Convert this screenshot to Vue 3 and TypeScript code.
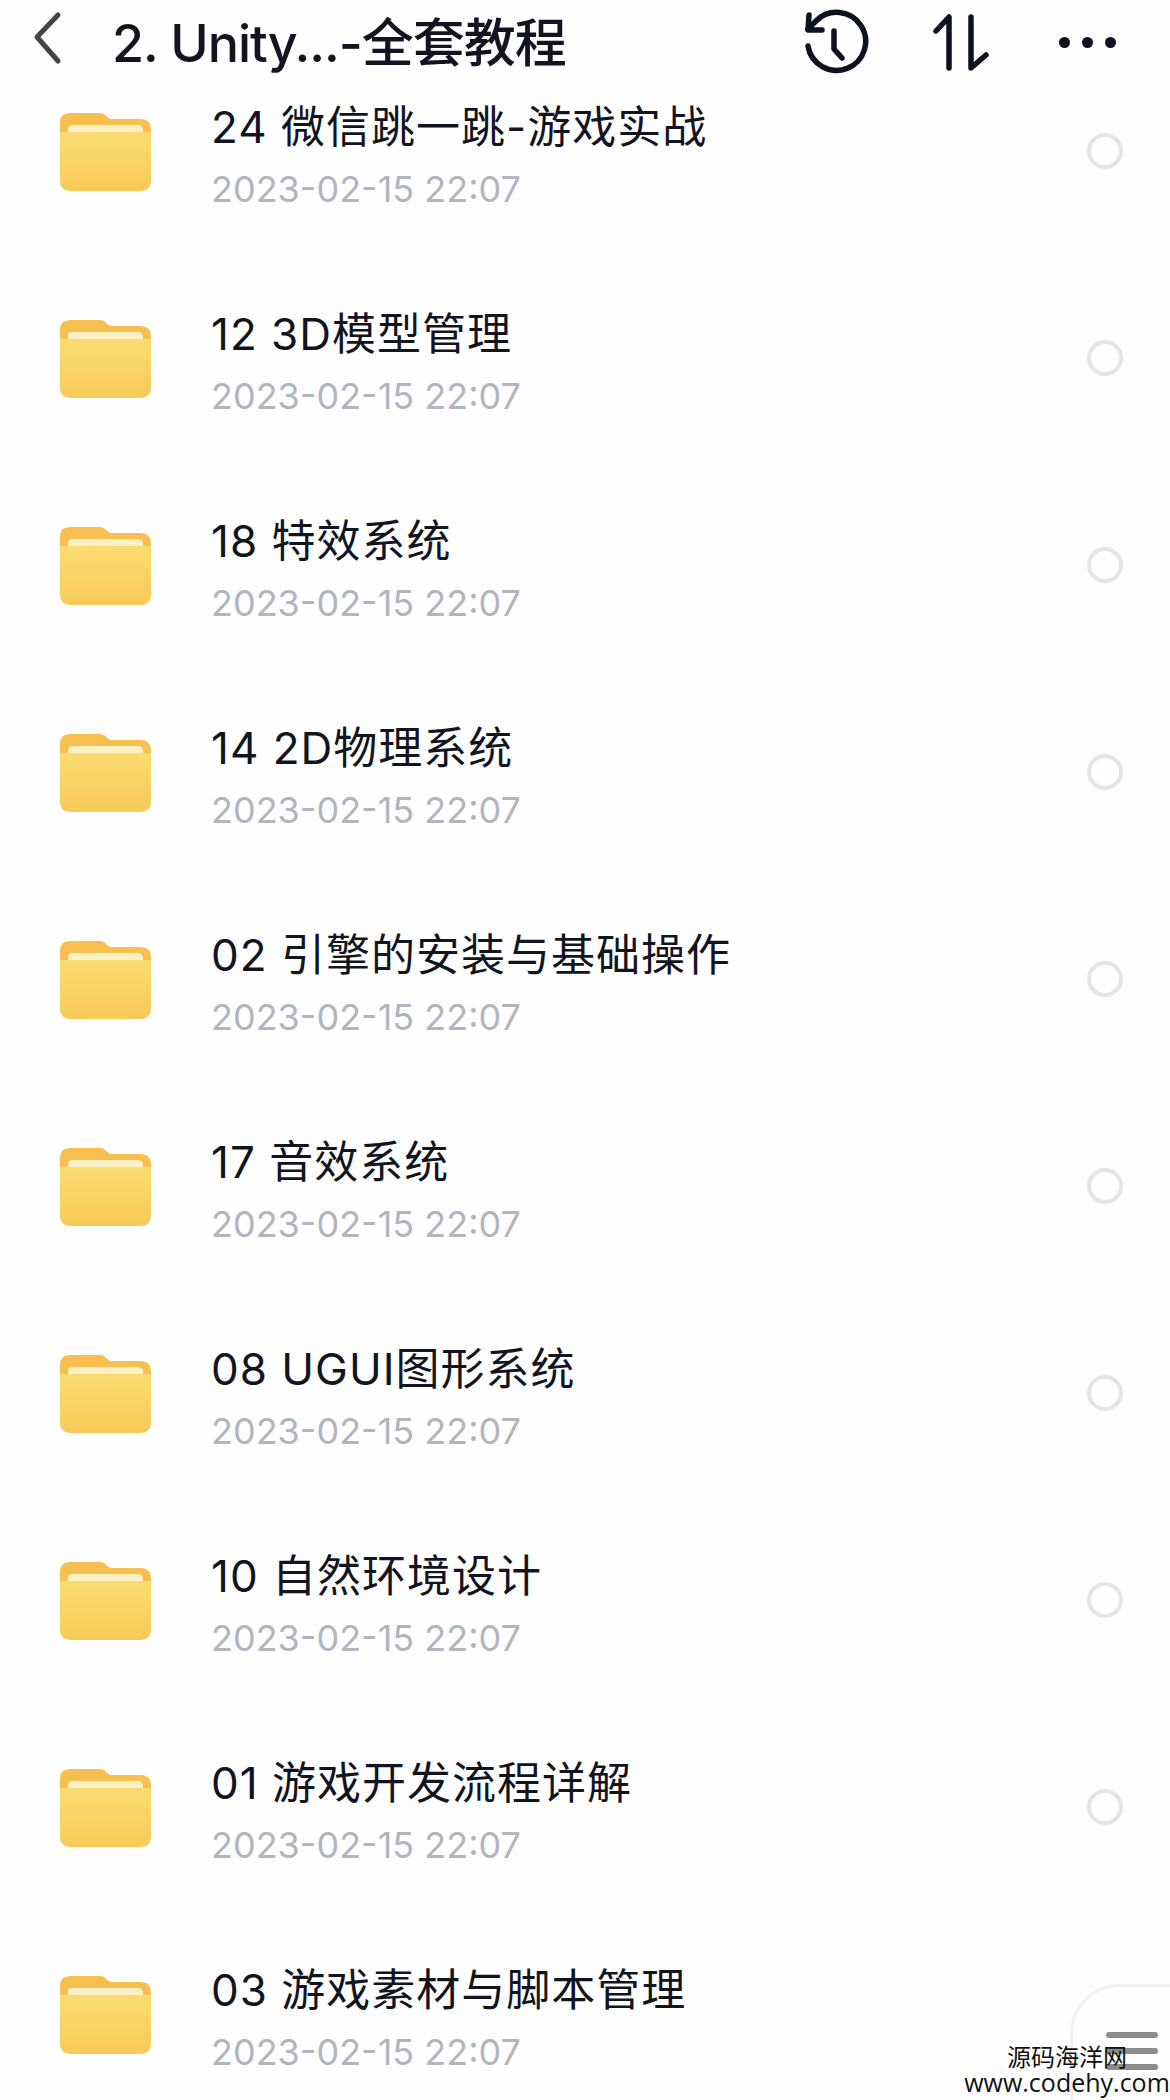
<script setup lang="ts">
interface Folder {
  name: string;
  time: string;
}

const folders: Folder[] = [
  { name: "24 微信跳一跳-游戏实战", time: "2023-02-15 22:07" },
  { name: "12 3D模型管理", time: "2023-02-15 22:07" },
  { name: "18 特效系统", time: "2023-02-15 22:07" },
  { name: "14 2D物理系统", time: "2023-02-15 22:07" },
  { name: "02 引擎的安装与基础操作", time: "2023-02-15 22:07" },
  { name: "17 音效系统", time: "2023-02-15 22:07" },
  { name: "08 UGUI图形系统", time: "2023-02-15 22:07" },
  { name: "10 自然环境设计", time: "2023-02-15 22:07" },
  { name: "01 游戏开发流程详解", time: "2023-02-15 22:07" },
  { name: "03 游戏素材与脚本管理", time: "2023-02-15 22:07" },
];
</script>

<template>
  <main class="page">
    <header class="topbar">
      <svg class="back" viewBox="0 0 30 54" width="30" height="54" aria-hidden="true">
        <path d="M25 4 L4 26 L25 50" />
      </svg>
      <h1 class="title">2. Unity...-全套教程</h1>
      <div class="actions">
        <svg class="icon" viewBox="0 0 72 72" width="72" height="72" aria-hidden="true">
          <path d="M9 40 A 29 29 0 1 0 17 15 L 9 23" />
          <path d="M10 9 L 9 24 L 23 24" />
          <path d="M35 25 L 35 43 L 43 52" />
        </svg>
        <svg class="icon" viewBox="0 0 72 72" width="72" height="72" aria-hidden="true">
          <path d="M15 25 L 28 11 L 28 62" />
          <path d="M50 11 L 50 62 L 65 49" />
        </svg>
        <div class="dots">
          <span></span>
          <span></span>
          <span></span>
        </div>
      </div>
    </header>

    <ul class="list">
      <li v-for="item in folders" :key="item.name" class="row">
        <svg class="folder" viewBox="0 0 91 79" width="91" height="79" aria-hidden="true">
          <defs>
            <linearGradient id="front" x1="0" y1="0" x2="0" y2="1">
              <stop offset="0" stop-color="#fadc72" />
              <stop offset="1" stop-color="#f7ca58" />
            </linearGradient>
          </defs>
          <path d="M0 10 Q0 0 10 0 L40 0 Q44 0 46 3 L50 6 L80 6 Q91 6 91 17 L91 30 L0 30 Z" fill="#f6bf4f" />
          <path d="M8 16 Q8 12 12 12 L78 12 Q82 12 83 16 L83 22 L8 22 Z" fill="#fdf0c2" />
          <path d="M0 19 L91 19 L91 67 Q91 78 80 78 L11 78 Q0 78 0 67 Z" fill="url(#front)" />
        </svg>
        <div class="info">
          <p class="name">{{ item.name }}</p>
          <p class="time">{{ item.time }}</p>
        </div>
        <span class="radio"></span>
      </li>
    </ul>

    <div class="fab">
      <span></span>
      <span></span>
      <span></span>
    </div>
    <div class="mark">
      <span class="mark-cn">源码海洋网</span>
      <span class="mark-en">www.codehy.com</span>
    </div>
  </main>
</template>

<style scoped>
.page {
  position: relative;
  width: 1170px;
  height: 2100px;
  overflow: hidden;
  background: #fefefe;
  color: #12151f;
  font-family: Inter, "Noto Sans CJK SC", sans-serif;
}

.topbar {
  display: flex;
  align-items: center;
  height: 84px;
  padding-left: 33px;
}

.back {
  flex: none;
  margin-top: -8px;
}

.back path {
  fill: none;
  stroke: #444;
  stroke-width: 5;
  stroke-linecap: round;
  stroke-linejoin: round;
}

.title {
  margin: -5px 0 0 49px;
  font-size: 52px;
  font-weight: 500;
  letter-spacing: -1px;
  white-space: nowrap;
}

.actions {
  display: flex;
  align-items: center;
  margin-left: auto;
  padding-right: 54px;
}

.icon {
  flex: none;
}

.icon path {
  fill: none;
  stroke: #0d1220;
  stroke-width: 5.5;
  stroke-linecap: round;
  stroke-linejoin: round;
}

.icon + .icon {
  margin-left: 50px;
}

.dots {
  display: flex;
  gap: 12px;
  margin-left: 66px;
}

.dots span {
  width: 11px;
  height: 11px;
  background: #0d1220;
  border-radius: 50%;
}

.list {
  margin: 0;
  padding: 0;
  list-style: none;
}

.row {
  display: flex;
  align-items: flex-start;
  height: 207px;
  padding: 29px 47px 0 60px;
  box-sizing: border-box;
}

.folder {
  flex: none;
}

.info {
  margin-left: 60px;
  margin-top: -13px;
}

.name {
  margin: 0;
  font-size: 44px;
  line-height: 54px;
  letter-spacing: 1px;
  white-space: nowrap;
}

.time {
  margin: 13px 0 0;
  font-size: 36px;
  line-height: 44px;
  color: #b1b5be;
  white-space: nowrap;
}

.radio {
  flex: none;
  width: 36px;
  height: 36px;
  margin: 20px 0 0 auto;
  border: 4px solid #e3e5e8;
  border-radius: 50%;
  box-sizing: border-box;
}

.fab {
  position: absolute;
  top: 1984px;
  left: 1070px;
  width: 160px;
  height: 160px;
  padding: 45px 0 0 33px;
  box-sizing: border-box;
  border: 3px solid #f1f1f2;
  border-radius: 50px;
  background: #fefefe;
}

.fab span {
  display: block;
  width: 52px;
  height: 6px;
  margin-bottom: 10px;
  background: #8c8c8c;
  border-radius: 3px;
}

.mark {
  position: absolute;
  top: 2046px;
  left: 965px;
  display: flex;
  flex-direction: column;
  align-items: center;
  width: 204px;
  color: #111;
}

.mark-cn {
  font-size: 24px;
  line-height: 24px;
}

.mark-en {
  font-family: "Open Sans", sans-serif;
  font-size: 25px;
  line-height: 24px;
}
</style>
